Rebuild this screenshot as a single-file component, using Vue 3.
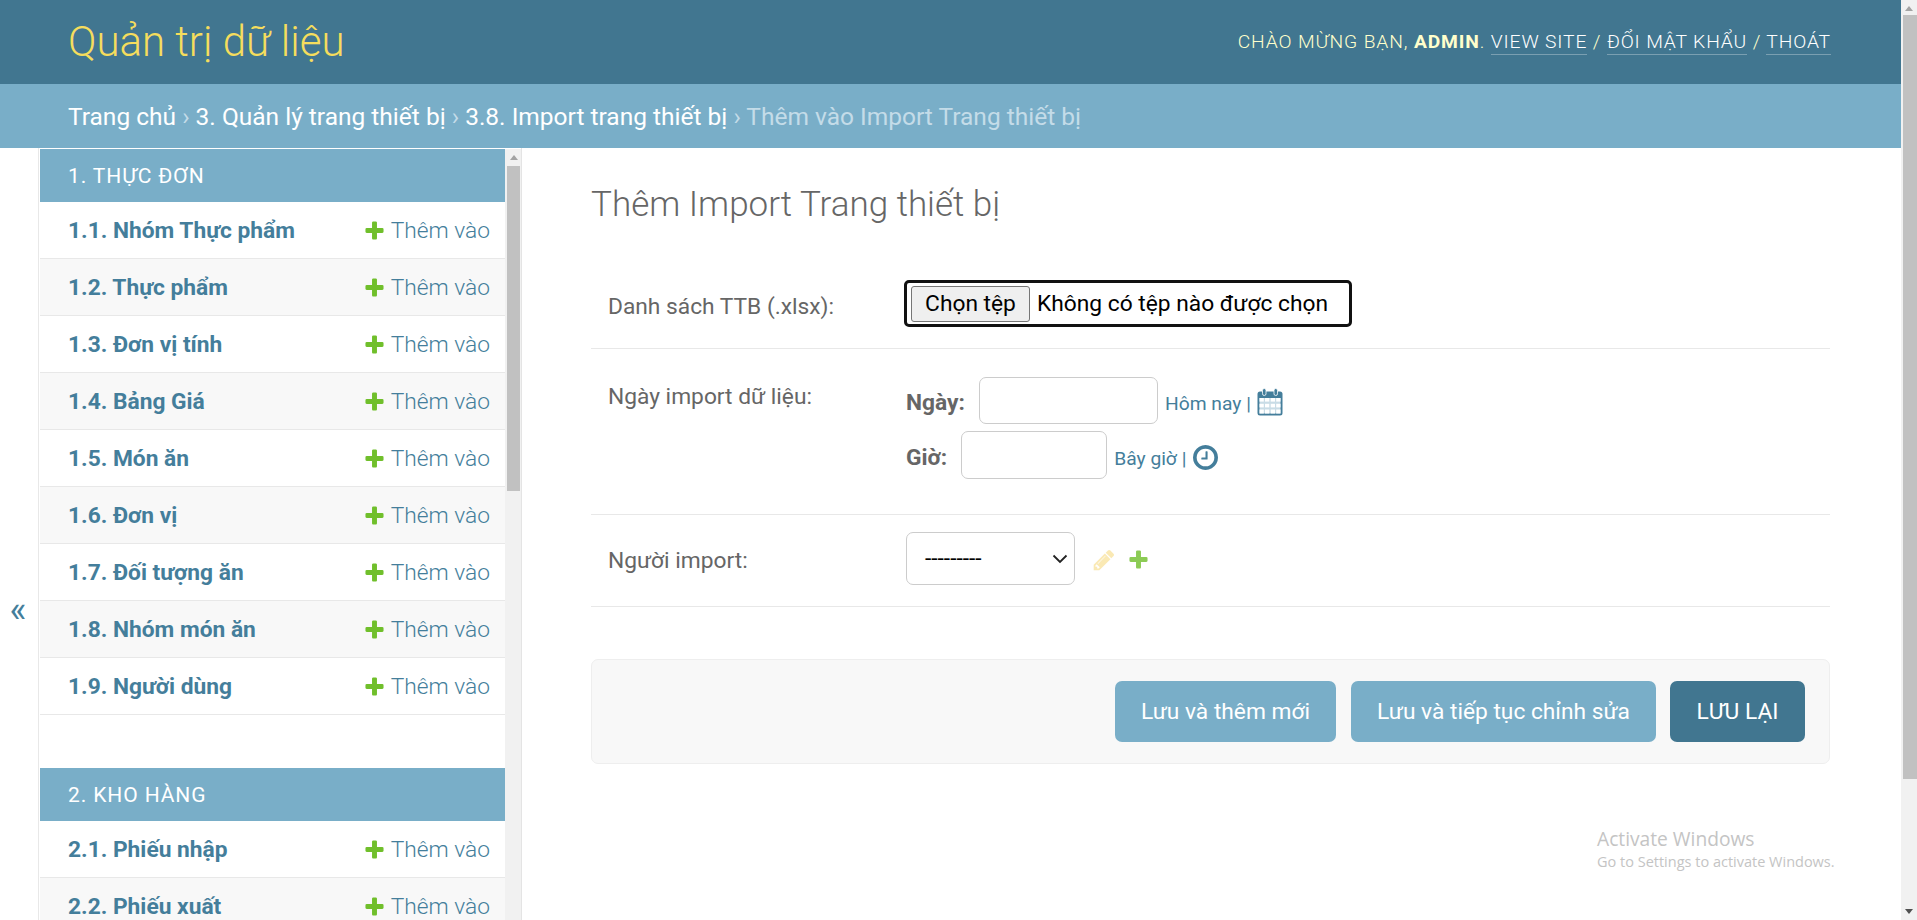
<script setup>
const menu1 = [
  '1.1. Nhóm Thực phẩm', '1.2. Thực phẩm', '1.3. Đơn vị tính', '1.4. Bảng Giá', '1.5. Món ăn',
  '1.6. Đơn vị', '1.7. Đối tượng ăn', '1.8. Nhóm món ăn', '1.9. Người dùng'
]
const menu2 = ['2.1. Phiếu nhập', '2.2. Phiếu xuất']
const plus = 'M1600 796v192q0 40-28 68t-68 28h-416v416q0 40-28 68t-68 28h-192q-40 0-68-28t-28-68v-416h-416q-40 0-68-28t-28-68v-192q0-40 28-68t68-28h416v-416q0-40 28-68t68-28h192q40 0 68 28t28 68v416h416q40 0 68 28t28 68z'
const sections = [
  { title: '1. Thực đơn', rows: menu1 },
  { title: '2. Kho hàng', rows: menu2 }
]
</script>

<template>
  <div class="screen">
    <div class="page">
      <header class="header">
        <div class="brand">Quản trị dữ liệu</div>
        <div class="tools">
          Chào mừng bạn, <strong>admin</strong>.
          <a>View site</a> / <a>Đổi mật khẩu</a> / <a>Thoát</a>
        </div>
      </header>
      <nav class="crumbs">
        <span class="crumb">Trang chủ</span> › <span class="crumb">3. Quản lý trang thiết bị</span> › <span class="crumb">3.8. Import trang thiết bị</span> › Thêm vào Import Trang thiết bị
      </nav>
      <div class="body">
        <div class="toggle">«</div>
        <aside class="side">
          <div class="side-list">
            <section v-for="s in sections" :key="s.title" class="module">
              <div class="caption">{{ s.title }}</div>
              <div v-for="r in s.rows" :key="r" class="row">
                <span class="row-name">{{ r }}</span>
                <span class="row-add">
                  <svg class="plus" viewBox="0 0 1792 1792"><path :d="plus" fill="#70bf2b" /></svg>
                  Thêm vào
                </span>
              </div>
            </section>
          </div>
          <div class="bar side-bar">
            <span class="arrow up"></span>
            <span class="thumb"></span>
          </div>
        </aside>
        <main class="main">
          <h1 class="title">Thêm Import Trang thiết bị</h1>
          <div class="form-row file-row">
            <label class="label">Danh sách TTB (.xlsx):</label>
            <div class="file">
              <button class="file-btn" type="button">Chọn tệp</button>
              <span class="file-text">Không có tệp nào được chọn</span>
            </div>
          </div>
          <div class="form-row date-row">
            <label class="label date-label">Ngày import dữ liệu:</label>
            <div class="dt">
              <div class="dt-line date-line">
                <b>Ngày:</b>
                <input class="input date-input" type="text" />
                <span class="shortcut"><a>Hôm nay</a> | </span>
                <svg class="cal" viewBox="0 0 26 28">
                  <rect x="0.5" y="3.5" width="25" height="24" rx="2.5" fill="#447e9b" />
                  <rect x="2.5" y="10" width="21" height="15.500" fill="#c9dce6" />
                  <g fill="#fff">
                    <rect x="2.5" y="10" width="4.300" height="3.600" /><rect x="8" y="10" width="4.300" height="3.600" /><rect x="13.700" y="10" width="4.300" height="3.600" /><rect x="19.200" y="10" width="4.300" height="3.600" />
                    <rect x="2.5" y="15.800" width="4.300" height="3.600" /><rect x="8" y="15.800" width="4.300" height="3.600" /><rect x="13.700" y="15.800" width="4.300" height="3.600" /><rect x="19.200" y="15.800" width="4.300" height="3.600" />
                    <rect x="2.5" y="21.500" width="4.300" height="4" /><rect x="8" y="21.500" width="4.300" height="4" /><rect x="13.700" y="21.500" width="4.300" height="4" /><rect x="19.200" y="21.500" width="4.300" height="4" />
                  </g>
                  <rect x="5.500" y="0.500" width="3.500" height="7" rx="1.700" fill="#447e9b" stroke="#fff" stroke-width="0.800" />
                  <rect x="17" y="0.500" width="3.500" height="7" rx="1.700" fill="#447e9b" stroke="#fff" stroke-width="0.800" />
                </svg>
              </div>
              <div class="dt-line time-line">
                <b>Giờ:</b>
                <input class="input time-input" type="text" />
                <span class="shortcut"><a>Bây giờ</a> | </span>
                <svg class="clock" viewBox="128 128 1536 1536"><path fill="#447e9b" d="M1024 544v448q0 14-9 23t-23 9h-320q-14 0-23-9t-9-23v-64q0-14 9-23t23-9h224v-352q0-14 9-23t23-9h64q14 0 23 9t9 23zm416 352q0-148-73-273t-198-198-273-73-273 73-198 198-73 273 73 273 198 198 273 73 273-73 198-198 73-273zm224 0q0 209-103 385.500t-279.500 279.500-385.500 103-385.500-103-279.500-279.500-103-385.500 103-385.500 279.500-279.500 385.500-103 385.500 103 279.500 279.500 103 385.500z" /></svg>
              </div>
            </div>
          </div>
          <div class="form-row user-row">
            <label class="label">Người import:</label>
            <div class="select">
              <span>---------</span>
              <svg class="chev" viewBox="0 0 16 10"><path d="M1.500 1.500 8 8l6.500-6.500" fill="none" stroke="#222" stroke-width="1.800" /></svg>
            </div>
            <svg class="pencil" viewBox="0 0 1792 1792"><path fill="#efb80b" d="M491 1536l91-91-235-235-91 91v107h128v128h107zm523-928q0-22-22-22-10 0-17 7l-542 542q-7 7-7 17 0 22 22 22 10 0 17-7l542-542q7-7 7-17zm-54-192l416 416-832 832h-416v-416zm683 96q0 53-37 90l-166 166-416-416 166-165q36-38 90-38 53 0 91 38l235 234q37 39 37 91z" /></svg>
            <svg class="plus user-plus" viewBox="0 0 1792 1792"><path :d="plus" fill="#70bf2b" /></svg>
          </div>
          <div class="submit">
            <button class="btn" type="button">Lưu và thêm mới</button>
            <button class="btn" type="button">Lưu và tiếp tục chỉnh sửa</button>
            <button class="btn primary" type="button">Lưu lại</button>
          </div>
        </main>
      </div>
      <div class="activate">
        <div class="act-a">Activate Windows</div>
        <div class="act-b">Go to Settings to activate Windows.</div>
      </div>
    </div>
    <div class="bar page-bar">
      <span class="arrow up top-arrow"></span>
      <span class="thumb"></span>
      <span class="spacer"></span>
      <span class="arrow down"></span>
    </div>
  </div>
</template>

<style>
html, body { margin: 0; height: 100%; overflow: hidden; background: #fff; }
</style>

<style scoped>
.screen {
  display: flex;
  height: 920px;
  overflow: hidden;
  font-family: Roboto, "Liberation Sans", sans-serif;
  color: #333;
}
.page { position: relative; flex: 1; min-width: 0; display: flex; flex-direction: column; }
.header {
  height: 84px;
  flex: none;
  background: #417690;
  display: flex;
  align-items: center;
  justify-content: space-between;
  padding: 0 70px 0 68px;
  box-sizing: border-box;
}
.brand { font-size: 42px; font-weight: 300; color: #f5dd5d; position: relative; top: -1px; }
.tools {
  font-size: 19.250px;
  font-weight: 300;
  letter-spacing: 0.870px;
  text-transform: uppercase;
  color: #ffc;
  position: relative;
  top: -1px;
}
.tools strong { font-weight: 700; }
.tools a { color: #fff; border-bottom: 1px solid rgba(255, 255, 255, 0.3); padding-bottom: 1px; }
.crumbs {
  height: 64px;
  flex: none;
  box-sizing: border-box;
  background: #79aec8;
  padding: 0 68px;
  line-height: 65px;
  font-size: 24.500px;
  font-weight: 400;
  color: #c4dce8;
}
.crumb { color: #fff; }
.body { flex: 1; min-height: 0; display: flex; }
.toggle {
  width: 36px;
  flex: none;
  box-sizing: border-box;
  padding-top: 442px;
  text-align: center;
  color: #447e9b;
  font-size: 36px;
  line-height: 40px;
  margin-right: 2px;
}
.side {
  width: 484px;
  flex: none;
  box-sizing: border-box;
  display: flex;
  border-left: 1px solid #e8e8e8;
  border-right: 1px solid #e4e4e4;
  padding-left: 1px;
  overflow: hidden;
  padding-top: 1px;
  background: #fff;
}
.side-list { width: 465px; flex: none; }
.module { margin-bottom: 53px; }
.caption {
  height: 53px;
  line-height: 54px;
  padding-left: 28px;
  background: #79aec8;
  color: #fff;
  font-size: 21px;
  font-weight: 400;
  letter-spacing: 0.900px;
  text-transform: uppercase;
}
.row {
  height: 57px;
  box-sizing: border-box;
  display: flex;
  align-items: center;
  justify-content: space-between;
  padding: 0 15px 0 28px;
  border-bottom: 1px solid #e8e8e8;
  background: #fff;
  font-size: 22.750px;
}
.row:nth-child(odd) { background: #f8f8f8; }
.row-name { font-weight: 700; color: #447e9b; }
.row-add { display: flex; align-items: center; gap: 5px; font-weight: 300; color: #447e9b; }
.plus { width: 23px; height: 23px; flex: none; }
.bar { display: flex; flex-direction: column; align-items: center; background: #f1f1f1; }
.side-bar { width: 17px; flex: none; }
.side-bar .thumb { width: 13px; height: 325px; }
.page-bar { width: 16px; flex: none; }
.page-bar .thumb { width: 14px; height: 764px; align-self: flex-end; }
.thumb { display: block; background: #c1c1c1; }
.spacer { flex: 1; }
.arrow { height: 17px; width: 100%; position: relative; flex: none; }
.top-arrow { height: 15px; }
.arrow::after {
  content: "";
  position: absolute;
  left: 50%;
  top: 6px;
  margin-left: -4px;
  border-left: 4px solid transparent;
  border-right: 4px solid transparent;
}
.up::after { border-bottom: 5px solid #a3a3a3; }
.down::after { border-top: 5px solid #505050; }
.main {
  flex: 1;
  min-width: 0;
  box-sizing: border-box;
  padding: 0 71px 0 69px;
}
.title {
  margin: 0;
  padding-top: 35px;
  height: 92px;
  box-sizing: border-box;
  font-size: 35px;
  line-height: 44px;
  font-weight: 300;
  color: #666;
}
.form-row {
  display: flex;
  align-items: flex-start;
  border-bottom: 1px solid #e8e8e8;
  box-sizing: border-box;
}
.label { width: 315px; flex: none; padding-left: 17px; box-sizing: border-box; font-size: 22.750px; color: #666; }
.file-row { height: 109px; padding-top: 40px; }
.file-row .label { padding-top: 13px; }
.file {
  display: flex;
  align-items: center;
  width: 448px;
  height: 47px;
  margin-left: -2px;
  box-sizing: border-box;
  border: 3px solid #111;
  border-radius: 5px;
  padding-left: 4px;
  color: #000;
  font-size: 22.750px;
}
.file-btn {
  width: 119px;
  height: 36px;
  box-sizing: border-box;
  padding: 0;
  margin-right: 7px;
  background: #efefef;
  border: 1px solid #767676;
  border-radius: 3px;
  color: #000;
  font: inherit;
}
.date-row { height: 166px; padding-top: 28px; }
.date-label { padding-top: 6px; }
.dt { display: flex; flex-direction: column; gap: 7px; }
.dt-line { display: flex; align-items: center; }
.dt-line b { font-size: 22.750px; font-weight: 700; color: #666; position: relative; top: 2px; }
.date-line { height: 47px; }
.time-line { height: 48px; }
.input {
  box-sizing: border-box;
  height: 100%;
  padding: 0;
  border: 1px solid #ccc;
  border-radius: 7px;
  background: #fff;
  outline: none;
}
.date-input { width: 179px; margin-left: 14px; }
.time-input { width: 146px; margin-left: 14px; }
.shortcut { margin: 6px 0 0 7px; font-size: 19.250px; color: #447e9b; white-space: pre; }
.shortcut a { color: #447e9b; }
.cal { width: 26px; height: 28px; margin: 3px 0 0 1px; }
.clock { width: 25px; height: 25px; margin: 4px 0 0 2px; }
.user-row { height: 92px; padding-top: 17px; }
.user-row .label { padding-top: 15px; }
.select {
  display: flex;
  align-items: center;
  justify-content: space-between;
  width: 169px;
  height: 53px;
  box-sizing: border-box;
  padding: 0 6px 0 18px;
  border: 1px solid #ccc;
  border-radius: 7px;
  color: #000;
  font-size: 22.750px;
}
.chev { width: 16px; height: 10px; }
.pencil { width: 24px; height: 24px; margin: 16px 0 0 17px; opacity: 0.3; }
.user-plus { margin: 16px 0 0 11px; opacity: 0.8; }
.submit {
  margin-top: 52px;
  height: 105px;
  box-sizing: border-box;
  display: flex;
  align-items: center;
  justify-content: flex-end;
  gap: 15px;
  padding-right: 24px;
  background: #f8f8f8;
  border: 1px solid #eee;
  border-radius: 7px;
}
.btn {
  height: 61px;
  padding: 0;
  border: 0;
  border-radius: 7px;
  background: #79aec8;
  color: #fff;
  font: 400 22.750px Roboto, sans-serif;
  width: 221px;
}
.btn:nth-child(2) { width: 305px; }
.primary { width: 135px; margin-left: -1px; background: #417690; text-transform: uppercase; }
.activate { position: absolute; left: 1597px; top: 826px; font-family: "Open Sans", sans-serif; color: #c4c4c4; white-space: nowrap; }
.act-a { font-size: 19.200px; line-height: 26px; }
.act-b { font-size: 14.500px; line-height: 20px; }
</style>
